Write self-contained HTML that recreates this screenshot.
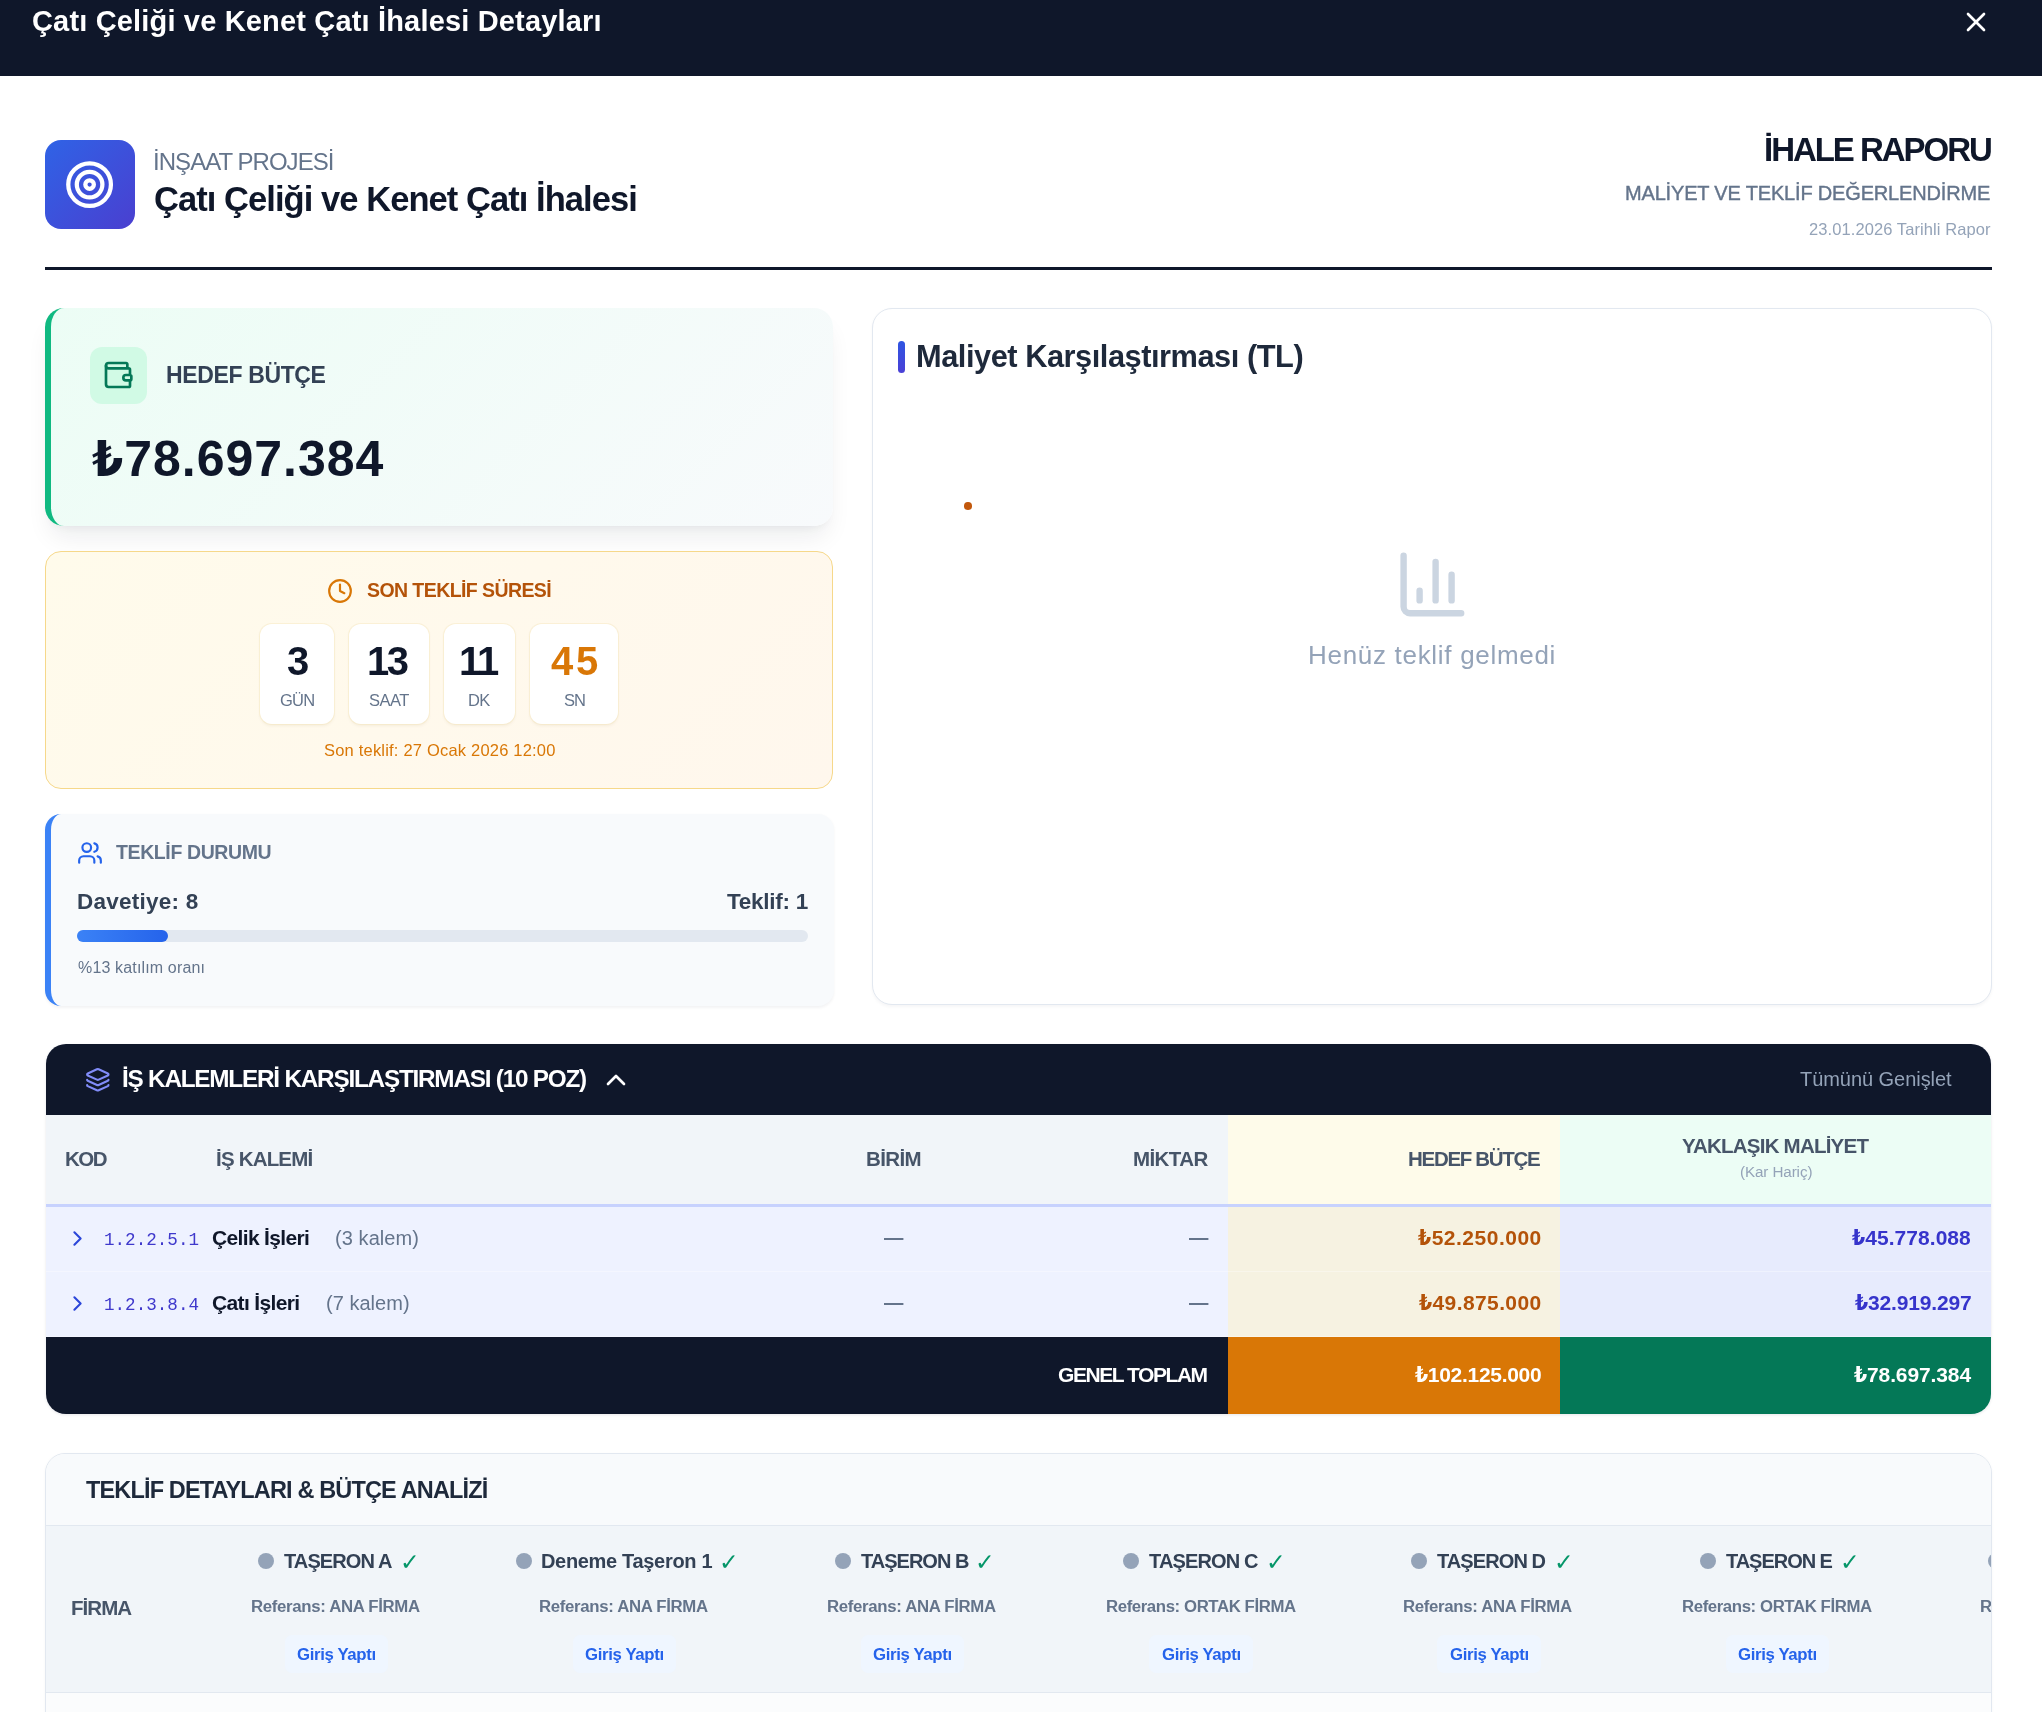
<!DOCTYPE html>
<html lang="tr">
<head>
<meta charset="utf-8">
<title>Çatı Çeliği ve Kenet Çatı İhalesi Detayları</title>
<style>
html,body{margin:0;padding:0;background:#fff;}
body{width:2042px;height:1712px;overflow:hidden;font-family:"Liberation Sans","DejaVu Sans",sans-serif;}
#pg{position:relative;width:2042px;height:1712px;overflow:hidden;background:#fff;}
#pg div,#pg svg{position:absolute;box-sizing:border-box;}
.t{position:absolute;white-space:nowrap;line-height:1;will-change:transform;}
svg{overflow:visible;fill:none;stroke-linecap:round;stroke-linejoin:round;}
.cb{background:#fff;border-radius:12px;box-shadow:0 0 0 1px rgba(245,225,170,.3),0 1.6px 3.2px rgba(120,80,20,.07);}
.dash{width:19.4px;height:2px;background:#64748b;}
.dot{width:16.4px;height:16.4px;border-radius:50%;background:#94a3b8;}
.bdg{height:38px;border-radius:7px;background:#eff6ff;}
</style>
</head>
<body>
<div id="pg">
<!-- top bar -->
<div style="left:0;top:0;width:2042px;height:76px;background:#0f172a;"></div>
<svg style="left:1960px;top:5.8px;" width="32" height="32" viewBox="0 0 24 24" stroke="#fff" stroke-width="2"><path d="M18 6 6 18"/><path d="m6 6 12 12"/></svg>

<!-- report header -->
<div style="left:45px;top:139.6px;width:89.7px;height:89.4px;border-radius:16px;background:linear-gradient(135deg,#2f63e6 0%,#4a3fd0 100%);"></div>
<svg style="left:64.1px;top:158.9px;" width="51.2" height="51.2" viewBox="0 0 24 24" stroke="#fff" stroke-width="2"><circle cx="12" cy="12" r="10"/><circle cx="12" cy="12" r="6"/><circle cx="12" cy="12" r="2"/></svg>
<div style="left:45px;top:267px;width:1947px;height:3px;background:#0f172a;"></div>

<!-- hedef butce card -->
<div style="left:45px;top:308px;width:788px;height:218px;border-radius:19px;border-left:6px solid #10b981;background:linear-gradient(135deg,#ecfdf5 0%,#f8fafc 100%);box-shadow:0 16px 24px -5px rgba(15,23,42,.075),0 6px 10px -6px rgba(15,23,42,.07);"></div>
<div style="left:90px;top:347px;width:57px;height:57px;border-radius:12px;background:#d1fae5;"></div>
<svg style="left:102.4px;top:359.2px;" width="32" height="32" viewBox="0 0 24 24" stroke="#047857" stroke-width="2"><path d="M19 7V4a1 1 0 0 0-1-1H5a2 2 0 0 0 0 4h15a1 1 0 0 1 1 1v4h-3a2 2 0 0 0 0 4h3a1 1 0 0 0 1-1v-2a1 1 0 0 0-1-1"/><path d="M3 5v14a2 2 0 0 0 2 2h15a1 1 0 0 0 1-1v-4"/></svg>

<!-- countdown card -->
<div style="left:45px;top:551px;width:788px;height:238px;border-radius:16px;border:1px solid #f6d88a;background:linear-gradient(135deg,#fffbeb 0%,#fff7ed 100%);"></div>
<svg style="left:327px;top:578px;" width="26" height="26" viewBox="0 0 24 24" stroke="#d97706" stroke-width="2"><circle cx="12" cy="12" r="10"/><polyline points="12 6 12 12 16 14"/></svg>
<div class="cb" style="left:260px;top:624px;width:74px;height:100px;"></div>
<div class="cb" style="left:349px;top:624px;width:80px;height:100px;"></div>
<div class="cb" style="left:444px;top:624px;width:71px;height:100px;"></div>
<div class="cb" style="left:530px;top:624px;width:88px;height:100px;"></div>

<!-- teklif durumu card -->
<div style="left:45px;top:814px;width:789px;height:192px;border-radius:16px;border-left:6px solid #3b82f6;background:#f8fafc;box-shadow:0 1.6px 3px rgba(15,23,42,.05);"></div>
<svg style="left:76.5px;top:840px;" width="26" height="26" viewBox="0 0 24 24" stroke="#2563eb" stroke-width="2"><path d="M16 21v-2a4 4 0 0 0-4-4H6a4 4 0 0 0-4 4v2"/><circle cx="9" cy="7" r="4"/><path d="M22 21v-2a4 4 0 0 0-3-3.87"/><path d="M16 3.13a4 4 0 0 1 0 7.75"/></svg>
<div style="left:77px;top:930px;width:731px;height:12px;border-radius:6px;background:#e2e8f0;"></div>
<div style="left:77px;top:930px;width:91px;height:12px;border-radius:6px;background:linear-gradient(90deg,#3b82f6,#2563eb);"></div>

<!-- chart card -->
<div style="left:872px;top:308px;width:1120px;height:697px;border-radius:20px;border:1px solid #e2e8f0;background:#fff;box-shadow:0 1.6px 3.2px rgba(15,23,42,.04);"></div>
<div style="left:898px;top:341px;width:7px;height:32px;border-radius:4px;background:linear-gradient(180deg,#2f55e2,#4a40d6);"></div>
<div style="left:964.2px;top:502px;width:7.6px;height:7.6px;border-radius:50%;background:#c2580c;"></div>
<svg style="left:1394px;top:546px;" width="76.8" height="76.8" viewBox="0 0 24 24" stroke="#cbd5e1" stroke-width="2"><path d="M3 3v16a2 2 0 0 0 2 2h16"/><path d="M18 17V9"/><path d="M13 17V5"/><path d="M8 17v-3"/></svg>

<!-- is kalemleri table -->
<div style="left:46px;top:1044px;width:1945px;height:370px;border-radius:20px;overflow:hidden;background:#eef2ff;box-shadow:0 1px 3px rgba(15,23,42,.10);">
  <div style="left:0;top:0;width:1945px;height:71px;background:#0f172a;"></div>
  <div style="left:0;top:71px;width:1182px;height:89px;background:#f1f5f9;"></div>
  <div style="left:1182px;top:71px;width:332px;height:89px;background:#fefbea;"></div>
  <div style="left:1514px;top:71px;width:431px;height:89px;background:#ecfdf5;"></div>
  <div style="left:0;top:160px;width:1945px;height:3px;background:#c7d2fe;"></div>
  <div style="left:1182px;top:163px;width:332px;height:130px;background:#f6f2e1;"></div>
  <div style="left:1514px;top:163px;width:431px;height:130px;background:#e7ebfd;"></div>
  <div style="left:0;top:227px;width:1945px;height:1px;background:rgba(255,255,255,.35);"></div>
  <div style="left:0;top:292px;width:1945px;height:1px;background:rgba(255,255,255,.35);"></div>
  <div style="left:0;top:293px;width:1182px;height:77px;background:#0f172a;"></div>
  <div style="left:1182px;top:293px;width:332px;height:77px;background:#d97706;"></div>
  <div style="left:1514px;top:293px;width:431px;height:77px;background:#047857;"></div>
</div>
<svg style="left:85px;top:1066.8px;" width="25.6" height="25.6" viewBox="0 0 24 24" stroke="#818cf8" stroke-width="2"><path d="M12.83 2.18a2 2 0 0 0-1.66 0L2.6 6.08a1 1 0 0 0 0 1.83l8.58 3.91a2 2 0 0 0 1.66 0l8.58-3.9a1 1 0 0 0 0-1.83z"/><path d="M2 12a1 1 0 0 0 .58.91l8.6 3.91a2 2 0 0 0 1.65 0l8.58-3.9A1 1 0 0 0 22 12"/><path d="M2 17a1 1 0 0 0 .58.91l8.6 3.91a2 2 0 0 0 1.65 0l8.58-3.9A1 1 0 0 0 22 17"/></svg>
<svg style="left:600px;top:1064px;" width="32" height="32" viewBox="0 0 24 24" stroke="#fff" stroke-width="2"><path d="m18 15-6-6-6 6"/></svg>
<svg style="left:64.8px;top:1226.0px;" width="25" height="25" viewBox="0 0 24 24" stroke="#2b46d9" stroke-width="2"><path d="m9 18 6-6-6-6"/></svg>
<svg style="left:64.8px;top:1291.0px;" width="25" height="25" viewBox="0 0 24 24" stroke="#2b46d9" stroke-width="2"><path d="m9 18 6-6-6-6"/></svg>

<!-- teklif detaylari card -->
<div style="left:45px;top:1453px;width:1947px;height:300px;border-radius:20px;border:1px solid #e2e8f0;background:#fbfcfd;overflow:hidden;box-shadow:0 1.6px 3.2px rgba(15,23,42,.04);">
  <div style="left:0;top:0;width:1947px;height:71px;background:#f8fafc;"></div>
  <div style="left:0;top:71px;width:1947px;height:168px;background:#f1f5f9;border-top:1px solid #e2e8f0;border-bottom:1px solid #e2e8f0;"></div>
</div>

<div class="dot" style="left:257.7px;top:1552.8px;"></div>
<div class="bdg" style="left:284.6px;top:1634.7px;width:103.6px;"></div>
<div class="dot" style="left:515.9px;top:1552.8px;"></div>
<div class="bdg" style="left:572.8px;top:1634.7px;width:103.6px;"></div>
<div class="dot" style="left:834.7px;top:1552.8px;"></div>
<div class="bdg" style="left:860.6px;top:1634.7px;width:103.6px;"></div>
<div class="dot" style="left:1122.6px;top:1552.8px;"></div>
<div class="bdg" style="left:1149.4px;top:1634.7px;width:103.6px;"></div>
<div class="dot" style="left:1410.9px;top:1552.8px;"></div>
<div class="bdg" style="left:1437.2px;top:1634.7px;width:103.6px;"></div>
<div class="dot" style="left:1699.7px;top:1552.8px;"></div>
<div class="bdg" style="left:1725.5px;top:1634.7px;width:103.6px;"></div>
<span class="t" style='left:32.00px;top:7px;font:700 29px/1 "Liberation Sans", "DejaVu Sans Condensed", "DejaVu Sans", sans-serif;color:#fff;letter-spacing:0.168px;'>Çatı Çeliği ve Kenet Çatı İhalesi Detayları</span>
<span class="t" style='left:152.80px;top:150px;font:400 24px/1 "Liberation Sans", "DejaVu Sans Condensed", "DejaVu Sans", sans-serif;color:#64748b;letter-spacing:-0.953px;'>İNŞAAT PROJESİ</span>
<span class="t" style='left:153.80px;top:182px;font:700 34.5px/1 "Liberation Sans", "DejaVu Sans Condensed", "DejaVu Sans", sans-serif;color:#0f172a;letter-spacing:-0.939px;'>Çatı Çeliği ve Kenet Çatı İhalesi</span>
<span class="t" style='left:1764.30px;top:133px;font:700 33px/1 "Liberation Sans", "DejaVu Sans Condensed", "DejaVu Sans", sans-serif;color:#0f172a;letter-spacing:-2.031px;'>İHALE RAPORU</span>
<span class="t" style='left:1625.40px;top:183px;font:400 20px/1 "Liberation Sans", "DejaVu Sans Condensed", "DejaVu Sans", sans-serif;color:#64748b;letter-spacing:-0.175px;-webkit-text-stroke:0.4px #64748b;'>MALİYET VE TEKLİF DEĞERLENDİRME</span>
<span class="t" style='left:1809.00px;top:221px;font:400 16.5px/1 "Liberation Sans", "DejaVu Sans Condensed", "DejaVu Sans", sans-serif;color:#94a3b8;letter-spacing:0.087px;'>23.01.2026 Tarihli Rapor</span>
<span class="t" style='left:166.00px;top:364px;font:700 23px/1 "Liberation Sans", "DejaVu Sans Condensed", "DejaVu Sans", sans-serif;color:#334155;letter-spacing:-0.362px;'>HEDEF BÜTÇE</span>
<span class="t" style='left:91.70px;top:434px;font:700 50px/1 "Liberation Sans", "DejaVu Sans Condensed", "DejaVu Sans", sans-serif;color:#0f172a;letter-spacing:0.976px;'>₺78.697.384</span>
<span class="t" style='left:366.60px;top:581px;font:700 19.5px/1 "Liberation Sans", "DejaVu Sans Condensed", "DejaVu Sans", sans-serif;color:#b45309;letter-spacing:-0.576px;'>SON TEKLİF SÜRESİ</span>
<span class="t" style='left:286.90px;top:641px;font:700 40px/1 "Liberation Sans", "DejaVu Sans Condensed", "DejaVu Sans", sans-serif;color:#0f172a;'>3</span>
<span class="t" style='left:367.35px;top:641px;font:700 40px/1 "Liberation Sans", "DejaVu Sans Condensed", "DejaVu Sans", sans-serif;color:#0f172a;letter-spacing:-2.546px;'>13</span>
<span class="t" style='left:458.60px;top:641px;font:700 40px/1 "Liberation Sans", "DejaVu Sans Condensed", "DejaVu Sans", sans-serif;color:#0f172a;letter-spacing:-2.039px;'>11</span>
<span class="t" style='left:550.85px;top:641px;font:700 40px/1 "Liberation Sans", "DejaVu Sans Condensed", "DejaVu Sans", sans-serif;color:#d97706;letter-spacing:2.654px;'>45</span>
<span class="t" style='left:279.95px;top:692px;font:400 16.5px/1 "Liberation Sans", "DejaVu Sans Condensed", "DejaVu Sans", sans-serif;color:#64748b;letter-spacing:-0.725px;'>GÜN</span>
<span class="t" style='left:368.95px;top:692px;font:400 16.5px/1 "Liberation Sans", "DejaVu Sans Condensed", "DejaVu Sans", sans-serif;color:#64748b;letter-spacing:-0.497px;'>SAAT</span>
<span class="t" style='left:468.00px;top:692px;font:400 16.5px/1 "Liberation Sans", "DejaVu Sans Condensed", "DejaVu Sans", sans-serif;color:#64748b;letter-spacing:-0.716px;'>DK</span>
<span class="t" style='left:563.60px;top:692px;font:400 16.5px/1 "Liberation Sans", "DejaVu Sans Condensed", "DejaVu Sans", sans-serif;color:#64748b;letter-spacing:-1.005px;'>SN</span>
<span class="t" style='left:323.80px;top:742px;font:400 16.5px/1 "Liberation Sans", "DejaVu Sans Condensed", "DejaVu Sans", sans-serif;color:#d97706;letter-spacing:0.197px;'>Son teklif: 27 Ocak 2026 12:00</span>
<span class="t" style='left:116.40px;top:843px;font:700 19.5px/1 "Liberation Sans", "DejaVu Sans Condensed", "DejaVu Sans", sans-serif;color:#64748b;letter-spacing:-0.386px;'>TEKLİF DURUMU</span>
<span class="t" style='left:76.70px;top:891px;font:700 22.5px/1 "Liberation Sans", "DejaVu Sans Condensed", "DejaVu Sans", sans-serif;color:#334155;letter-spacing:0.240px;'>Davetiye: 8</span>
<span class="t" style='left:727.40px;top:891px;font:700 22.5px/1 "Liberation Sans", "DejaVu Sans Condensed", "DejaVu Sans", sans-serif;color:#334155;letter-spacing:-0.255px;'>Teklif: 1</span>
<span class="t" style='left:78.30px;top:960px;font:400 16px/1 "Liberation Sans", "DejaVu Sans Condensed", "DejaVu Sans", sans-serif;color:#64748b;letter-spacing:0.153px;'>%13 katılım oranı</span>
<span class="t" style='left:916.30px;top:342px;font:700 30.8px/1 "Liberation Sans", "DejaVu Sans Condensed", "DejaVu Sans", sans-serif;color:#1e293b;letter-spacing:-0.476px;'>Maliyet Karşılaştırması (TL)</span>
<span class="t" style='left:1308.10px;top:642px;font:400 26px/1 "Liberation Sans", "DejaVu Sans Condensed", "DejaVu Sans", sans-serif;color:#94a3b8;letter-spacing:0.698px;'>Henüz teklif gelmedi</span>
<span class="t" style='left:122.30px;top:1067px;font:700 24.3px/1 "Liberation Sans", "DejaVu Sans Condensed", "DejaVu Sans", sans-serif;color:#fff;letter-spacing:-1.214px;'>İŞ KALEMLERİ KARŞILAŞTIRMASI (10 POZ)</span>
<span class="t" style='left:1800.30px;top:1069px;font:400 20px/1 "Liberation Sans", "DejaVu Sans Condensed", "DejaVu Sans", sans-serif;color:#94a3b8;letter-spacing:-0.046px;'>Tümünü Genişlet</span>
<span class="t" style='left:65.00px;top:1149px;font:700 20.5px/1 "Liberation Sans", "DejaVu Sans Condensed", "DejaVu Sans", sans-serif;color:#475569;letter-spacing:-1.525px;'>KOD</span>
<span class="t" style='left:216.20px;top:1149px;font:700 20.5px/1 "Liberation Sans", "DejaVu Sans Condensed", "DejaVu Sans", sans-serif;color:#475569;letter-spacing:-0.806px;'>İŞ KALEMİ</span>
<span class="t" style='left:866.10px;top:1149px;font:700 20.5px/1 "Liberation Sans", "DejaVu Sans Condensed", "DejaVu Sans", sans-serif;color:#475569;letter-spacing:-0.625px;'>BİRİM</span>
<span class="t" style='left:1132.90px;top:1149px;font:700 20.5px/1 "Liberation Sans", "DejaVu Sans Condensed", "DejaVu Sans", sans-serif;color:#475569;letter-spacing:-0.576px;'>MİKTAR</span>
<span class="t" style='left:1408.40px;top:1149px;font:700 20.5px/1 "Liberation Sans", "DejaVu Sans Condensed", "DejaVu Sans", sans-serif;color:#475569;letter-spacing:-1.301px;'>HEDEF BÜTÇE</span>
<span class="t" style='left:1682.00px;top:1136px;font:700 20.5px/1 "Liberation Sans", "DejaVu Sans Condensed", "DejaVu Sans", sans-serif;color:#475569;letter-spacing:-0.776px;'>YAKLAŞIK MALİYET</span>
<span class="t" style='left:1739.50px;top:1164px;font:400 15.2px/1 "Liberation Sans", "DejaVu Sans Condensed", "DejaVu Sans", sans-serif;color:#94a3b8;letter-spacing:-0.095px;'>(Kar Hariç)</span>
<span class="t" style='left:103.60px;top:1232px;font:400 17.6px/1 "Liberation Mono", "DejaVu Sans Mono", monospace;color:#3f39cc;'>1.2.2.5.1</span>
<span class="t" style='left:211.70px;top:1227px;font:700 21px/1 "Liberation Sans", "DejaVu Sans Condensed", "DejaVu Sans", sans-serif;color:#0f172a;letter-spacing:-0.657px;'>Çelik İşleri</span>
<span class="t" style='left:335.30px;top:1228px;font:400 20px/1 "Liberation Sans", "DejaVu Sans Condensed", "DejaVu Sans", sans-serif;color:#64748b;letter-spacing:0.076px;'>(3 kalem)</span>
<span class="t" style='left:1417.90px;top:1227px;font:700 21px/1 "Liberation Sans", "DejaVu Sans Condensed", "DejaVu Sans", sans-serif;color:#b45309;letter-spacing:0.503px;'>₺52.250.000</span>
<span class="t" style='left:1851.50px;top:1227px;font:700 21px/1 "Liberation Sans", "DejaVu Sans Condensed", "DejaVu Sans", sans-serif;color:#3634cb;letter-spacing:0.053px;'>₺45.778.088</span>
<span class="t" style='left:103.60px;top:1297px;font:400 17.6px/1 "Liberation Mono", "DejaVu Sans Mono", monospace;color:#3f39cc;'>1.2.3.8.4</span>
<span class="t" style='left:211.70px;top:1292px;font:700 21px/1 "Liberation Sans", "DejaVu Sans Condensed", "DejaVu Sans", sans-serif;color:#0f172a;letter-spacing:-0.641px;'>Çatı İşleri</span>
<span class="t" style='left:325.60px;top:1293px;font:400 20px/1 "Liberation Sans", "DejaVu Sans Condensed", "DejaVu Sans", sans-serif;color:#64748b;letter-spacing:0.026px;'>(7 kalem)</span>
<span class="t" style='left:1419.00px;top:1292px;font:700 21px/1 "Liberation Sans", "DejaVu Sans Condensed", "DejaVu Sans", sans-serif;color:#b45309;letter-spacing:0.393px;'>₺49.875.000</span>
<span class="t" style='left:1854.60px;top:1292px;font:700 21px/1 "Liberation Sans", "DejaVu Sans Condensed", "DejaVu Sans", sans-serif;color:#3634cb;letter-spacing:-0.157px;'>₺32.919.297</span>
<span class="t" style='left:1058.20px;top:1364px;font:700 21px/1 "Liberation Sans", "DejaVu Sans Condensed", "DejaVu Sans", sans-serif;color:#fff;letter-spacing:-1.451px;'>GENEL TOPLAM</span>
<span class="t" style='left:1414.90px;top:1364px;font:700 21px/1 "Liberation Sans", "DejaVu Sans Condensed", "DejaVu Sans", sans-serif;color:#fff;letter-spacing:-0.295px;'>₺102.125.000</span>
<span class="t" style='left:1853.70px;top:1364px;font:700 21px/1 "Liberation Sans", "DejaVu Sans Condensed", "DejaVu Sans", sans-serif;color:#fff;letter-spacing:-0.117px;'>₺78.697.384</span>
<span class="t" style='left:85.80px;top:1479px;font:700 23.5px/1 "Liberation Sans", "DejaVu Sans Condensed", "DejaVu Sans", sans-serif;color:#1e293b;letter-spacing:-0.851px;'>TEKLİF DETAYLARI &amp; BÜTÇE ANALİZİ</span>
<span class="t" style='left:71.10px;top:1598px;font:700 20.5px/1 "Liberation Sans", "DejaVu Sans Condensed", "DejaVu Sans", sans-serif;color:#475569;letter-spacing:-0.950px;'>FİRMA</span>
<span class="t" style='left:284.20px;top:1551px;font:700 20px/1 "Liberation Sans", "DejaVu Sans Condensed", "DejaVu Sans", sans-serif;color:#334155;letter-spacing:-0.894px;'>TAŞERON A</span>
<span class="t" style='left:400.40px;top:1551px;font:700 23.5px/1 "DejaVu Sans", "Liberation Sans", sans-serif;color:#059669;'>✓</span>
<span class="t" style='left:250.80px;top:1599px;font:700 16.8px/1 "Liberation Sans", "DejaVu Sans Condensed", "DejaVu Sans", sans-serif;color:#64748b;letter-spacing:-0.328px;'>Referans: ANA FİRMA</span>
<span class="t" style='left:297.05px;top:1647px;font:700 16.8px/1 "Liberation Sans", "DejaVu Sans Condensed", "DejaVu Sans", sans-serif;color:#2563eb;letter-spacing:-0.364px;'>Giriş Yaptı</span>
<span class="t" style='left:541.00px;top:1551px;font:700 20px/1 "Liberation Sans", "DejaVu Sans Condensed", "DejaVu Sans", sans-serif;color:#334155;letter-spacing:-0.323px;'>Deneme Taşeron 1</span>
<span class="t" style='left:718.80px;top:1551px;font:700 23.5px/1 "DejaVu Sans", "Liberation Sans", sans-serif;color:#059669;'>✓</span>
<span class="t" style='left:539.00px;top:1599px;font:700 16.8px/1 "Liberation Sans", "DejaVu Sans Condensed", "DejaVu Sans", sans-serif;color:#64748b;letter-spacing:-0.328px;'>Referans: ANA FİRMA</span>
<span class="t" style='left:585.25px;top:1647px;font:700 16.8px/1 "Liberation Sans", "DejaVu Sans Condensed", "DejaVu Sans", sans-serif;color:#2563eb;letter-spacing:-0.364px;'>Giriş Yaptı</span>
<span class="t" style='left:861.10px;top:1551px;font:700 20px/1 "Liberation Sans", "DejaVu Sans Condensed", "DejaVu Sans", sans-serif;color:#334155;letter-spacing:-0.994px;'>TAŞERON B</span>
<span class="t" style='left:975.40px;top:1551px;font:700 23.5px/1 "DejaVu Sans", "Liberation Sans", sans-serif;color:#059669;'>✓</span>
<span class="t" style='left:826.80px;top:1599px;font:700 16.8px/1 "Liberation Sans", "DejaVu Sans Condensed", "DejaVu Sans", sans-serif;color:#64748b;letter-spacing:-0.328px;'>Referans: ANA FİRMA</span>
<span class="t" style='left:873.05px;top:1647px;font:700 16.8px/1 "Liberation Sans", "DejaVu Sans Condensed", "DejaVu Sans", sans-serif;color:#2563eb;letter-spacing:-0.364px;'>Giriş Yaptı</span>
<span class="t" style='left:1149.10px;top:1551px;font:700 20px/1 "Liberation Sans", "DejaVu Sans Condensed", "DejaVu Sans", sans-serif;color:#334155;letter-spacing:-0.844px;'>TAŞERON C</span>
<span class="t" style='left:1265.70px;top:1551px;font:700 23.5px/1 "DejaVu Sans", "Liberation Sans", sans-serif;color:#059669;'>✓</span>
<span class="t" style='left:1105.70px;top:1599px;font:700 16.8px/1 "Liberation Sans", "DejaVu Sans Condensed", "DejaVu Sans", sans-serif;color:#64748b;letter-spacing:-0.408px;'>Referans: ORTAK FİRMA</span>
<span class="t" style='left:1161.85px;top:1647px;font:700 16.8px/1 "Liberation Sans", "DejaVu Sans Condensed", "DejaVu Sans", sans-serif;color:#2563eb;letter-spacing:-0.364px;'>Giriş Yaptı</span>
<span class="t" style='left:1437.40px;top:1551px;font:700 20px/1 "Liberation Sans", "DejaVu Sans Condensed", "DejaVu Sans", sans-serif;color:#334155;letter-spacing:-0.907px;'>TAŞERON D</span>
<span class="t" style='left:1553.50px;top:1551px;font:700 23.5px/1 "DejaVu Sans", "Liberation Sans", sans-serif;color:#059669;'>✓</span>
<span class="t" style='left:1403.40px;top:1599px;font:700 16.8px/1 "Liberation Sans", "DejaVu Sans Condensed", "DejaVu Sans", sans-serif;color:#64748b;letter-spacing:-0.328px;'>Referans: ANA FİRMA</span>
<span class="t" style='left:1449.65px;top:1647px;font:700 16.8px/1 "Liberation Sans", "DejaVu Sans Condensed", "DejaVu Sans", sans-serif;color:#2563eb;letter-spacing:-0.364px;'>Giriş Yaptı</span>
<span class="t" style='left:1726.20px;top:1551px;font:700 20px/1 "Liberation Sans", "DejaVu Sans Condensed", "DejaVu Sans", sans-serif;color:#334155;letter-spacing:-1.032px;'>TAŞERON E</span>
<span class="t" style='left:1840.30px;top:1551px;font:700 23.5px/1 "DejaVu Sans", "Liberation Sans", sans-serif;color:#059669;'>✓</span>
<span class="t" style='left:1681.80px;top:1599px;font:700 16.8px/1 "Liberation Sans", "DejaVu Sans Condensed", "DejaVu Sans", sans-serif;color:#64748b;letter-spacing:-0.408px;'>Referans: ORTAK FİRMA</span>
<span class="t" style='left:1737.95px;top:1647px;font:700 16.8px/1 "Liberation Sans", "DejaVu Sans Condensed", "DejaVu Sans", sans-serif;color:#2563eb;letter-spacing:-0.364px;'>Giriş Yaptı</span>
<span class="t" style='left:884.00px;top:1228px;font:700 19.4px/1 "Liberation Sans", "DejaVu Sans Condensed", "DejaVu Sans", sans-serif;color:#64748b;'>—</span>
<span class="t" style='left:884.00px;top:1293px;font:700 19.4px/1 "Liberation Sans", "DejaVu Sans Condensed", "DejaVu Sans", sans-serif;color:#64748b;'>—</span>
<span class="t" style='left:1189.30px;top:1228px;font:700 19.4px/1 "Liberation Sans", "DejaVu Sans Condensed", "DejaVu Sans", sans-serif;color:#64748b;'>—</span>
<span class="t" style='left:1189.30px;top:1293px;font:700 19.4px/1 "Liberation Sans", "DejaVu Sans Condensed", "DejaVu Sans", sans-serif;color:#64748b;'>—</span>
<div style="left:46px;top:1526px;width:1944.6px;height:166px;overflow:hidden;">
<div class="dot" style="left:1941.7px;top:26.799999999999955px;"></div>
<span class="t" style='left:1968.20px;top:25px;font:700 20px/1 "Liberation Sans", "DejaVu Sans Condensed", "DejaVu Sans", sans-serif;color:#334155;letter-spacing:-0.857px;'>TAŞERON F</span>
<span class="t" style='left:1933.80px;top:73px;font:700 16.8px/1 "Liberation Sans", "DejaVu Sans Condensed", "DejaVu Sans", sans-serif;color:#64748b;letter-spacing:-0.328px;'>Referans: ANA FİRMA</span>
</div>
</div>
</body>
</html>
